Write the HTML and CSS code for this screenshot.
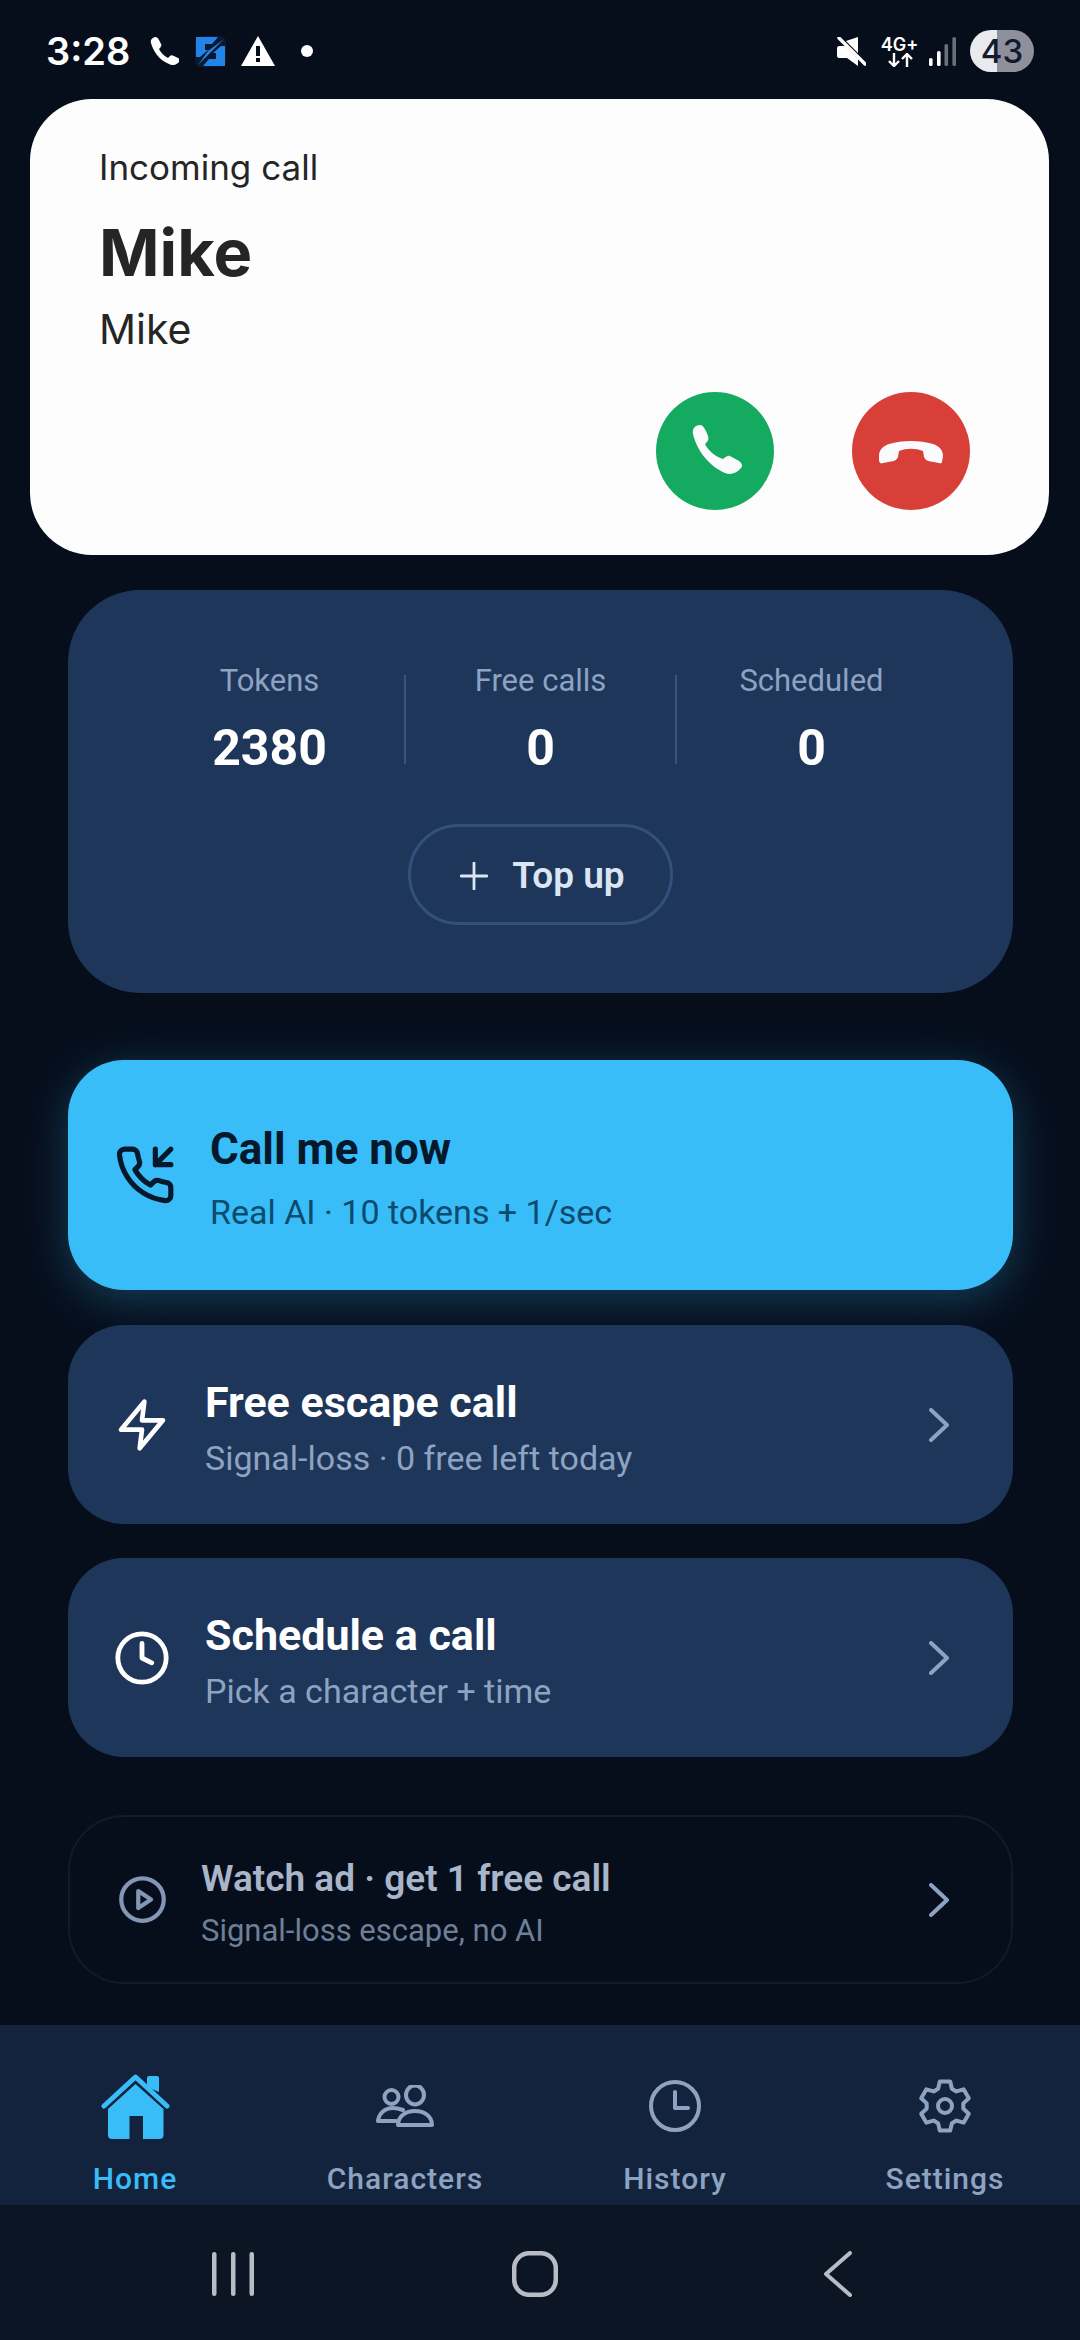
FILE: index.html
```html
<!DOCTYPE html>
<html lang="en">
<head>
  <meta charset="UTF-8" />
  <title>Home</title>
  <link rel="stylesheet" href="styles.css">
</head>
<body>

  <div class="status-bar">
    <div class="status-left">
      <span class="clock">3:28</span>
      <svg class="st-phone" viewBox="0 0 29 28"><path d="M1 6C0 3 2 1 5 0c2 0 3 1 4 3l2 4c1 1 0 3-1 4l-1 1c2 4 5 7 9 9l2-2c1-1 2-1 4 0l4 2c2 1 2 3 1 4-3 3-6 4-10 2C9 23 3 14 1 6z" fill="#fff"/></svg>
      <svg class="st-app" viewBox="0 0 29 29">
        <rect x="-1" y="-1" width="31" height="31" rx="6" fill="#0b1930"/>
        <path d="M0 0H22L16 7H9V13H12L4 20H0Z" fill="#2283e8"/>
        <path d="M29 29H7L13 22H20V16H17L25 9H29Z" fill="#2283e8"/>
        <path d="M28 2 2 28 12 14 Z" fill="#2283e8"/>
      </svg>
      <svg class="st-warn" viewBox="0 0 34 30"><path fill-rule="evenodd" d="M17 0 34 30H0zM15 10v10h4V10zM15 22v4h4v-4z" fill="#fff"/></svg>
      <span class="st-dot"></span>
    </div>
    <div class="status-right">
      <svg class="st-mute" viewBox="0 0 29 29">
        <path d="M21 0v16L9 4zM2 9h6l11 11 2 2v7l-11-8H2c-1 0-2-1-2-2v-8c0-1 1-2 2-2z" fill="#fff"/>
        <path d="M2 1 28 27" stroke="#fff" stroke-width="3.4" stroke-linecap="round"/>
      </svg>
      <div class="st-net">
        <span class="net-label">4G+</span>
        <svg class="net-arrows" viewBox="0 0 26 14" fill="none" stroke="#fff" stroke-width="2.4">
          <path d="M7 0v13M2 8l5 5 5-5M20 14V1M15 6l5-5 5 5"/>
        </svg>
      </div>
      <svg class="st-signal" viewBox="0 0 27 29">
        <rect x="0" y="21" width="3.6" height="8" rx="1.6" fill="#fff"/>
        <rect x="8" y="14" width="3.6" height="15" rx="1.6" fill="#fff"/>
        <rect x="15.500" y="7" width="3.6" height="22" rx="1.6" fill="#6b6f78"/>
        <rect x="23.400" y="0" width="3.6" height="29" rx="1.6" fill="#6b6f78"/>
      </svg>
      <div class="battery"><span>43</span></div>
    </div>
  </div>

  <div class="call-card">
    <div class="call-label">Incoming call</div>
    <div class="call-name">Mike</div>
    <div class="call-sub">Mike</div>
    <div class="call-actions">
      <div class="round-btn accept">
        <svg viewBox="0 0 118 118"><path d="M37 42C36 37 39 33 44 33C47 33 48 36 50 39L52 44C53 47 52 49 50 51C49 52 49 53 50 54C54 60 60 65 67 67C69 66 71 63 74 64L83 69C86 71 87 74 85 76C80 82 74 83 69 81C55 75 41 60 37 42Z" fill="#fbfbfe"/></svg>
      </div>
      <div class="round-btn decline">
        <svg viewBox="0 0 118 118"><path d="M27 64C27 58 31 54 37 52C50 48 68 48 81 52C87 54 91 58 91 64L90 70C90 71 88 72 87 71L76 69C74 68 73 67 72 65L71 59C63 56 55 56 47 59L46 65C45 67 44 68 42 69L31 71C29 72 28 71 27 69Z" fill="#fbfbfe"/></svg>
      </div>
    </div>
  </div>

  <div class="content">
    <div class="stats-card">
      <div class="stats">
        <div class="stat">
          <div class="stat-label">Tokens</div>
          <div class="stat-value">2380</div>
        </div>
        <div class="stat-sep"></div>
        <div class="stat">
          <div class="stat-label">Free calls</div>
          <div class="stat-value">0</div>
        </div>
        <div class="stat-sep"></div>
        <div class="stat">
          <div class="stat-label">Scheduled</div>
          <div class="stat-value">0</div>
        </div>
      </div>
      <div class="top-up">
        <svg viewBox="0 0 28 28" fill="none" stroke="#dce5f3" stroke-width="2.800" stroke-linecap="round"><path d="M14 1v26M1 14h26"/></svg>
        <span>Top up</span>
      </div>
    </div>

    <div class="row row-primary">
      <div class="row-icon">
        <svg class="ic-call" viewBox="0 0 24 24" fill="none" stroke="#06182c" stroke-width="2" stroke-linecap="round" stroke-linejoin="round">
          <path d="M16 2v6h6M22 2l-6 6"/>
          <path d="M22 16.920v3a2 2 0 0 1-2.180 2 19.790 19.790 0 0 1-8.630-3.070 19.500 19.500 0 0 1-6-6 19.790 19.790 0 0 1-3.070-8.670A2 2 0 0 1 4.110 2h3a2 2 0 0 1 2 1.720 12.840 12.840 0 0 0 .7 2.810 2 2 0 0 1-.45 2.110L8.090 9.910a16 16 0 0 0 6 6l1.270-1.270a2 2 0 0 1 2.110-.45 12.840 12.840 0 0 0 2.810.7A2 2 0 0 1 22 16.92z"/>
        </svg>
      </div>
      <div class="row-text">
        <div class="row-title">Call me now</div>
        <div class="row-sub">Real AI · 10 tokens + 1/sec</div>
      </div>
    </div>

    <div class="row row-plain row-free">
      <div class="row-icon">
        <svg class="ic-zap" viewBox="0 0 24 24" fill="none" stroke="#fff" stroke-width="2" stroke-linejoin="round"><path d="M13 2 3 14h9l-1 8 10-12h-9z"/></svg>
      </div>
      <div class="row-text">
        <div class="row-title">Free escape call</div>
        <div class="row-sub">Signal-loss · 0 free left today</div>
      </div>
      <svg class="chevron" viewBox="0 0 22 34"><path d="M3 2 19 17 3 32"/></svg>
    </div>

    <div class="row row-plain row-schedule">
      <div class="row-icon">
        <svg class="ic-clock" viewBox="0 0 24 24" fill="none" stroke="#fff" stroke-width="2" stroke-linecap="round" stroke-linejoin="round"><circle cx="12" cy="12" r="10"/><path d="M12 6v6l4 2"/></svg>
      </div>
      <div class="row-text">
        <div class="row-title">Schedule a call</div>
        <div class="row-sub">Pick a character + time</div>
      </div>
      <svg class="chevron" viewBox="0 0 22 34"><path d="M3 2 19 17 3 32"/></svg>
    </div>

    <div class="row row-ghost">
      <div class="row-icon">
        <svg class="ic-play" viewBox="0 0 24 24" fill="none" stroke="#8396b3" stroke-width="2" stroke-linejoin="round"><circle cx="12" cy="12" r="10"/><path d="M10 8l6 4-6 4z"/></svg>
      </div>
      <div class="row-text">
        <div class="row-title">Watch ad · get 1 free call</div>
        <div class="row-sub">Signal-loss escape, no AI</div>
      </div>
      <svg class="chevron" viewBox="0 0 22 34"><path d="M3 2 19 17 3 32"/></svg>
    </div>
  </div>

  <div class="tabs">
    <div class="tab active">
      <svg class="ic-home" viewBox="0 0 69 66">
        <path d="M46 14V5a2 2 0 0 1 2-2h8a2 2 0 0 1 2 2v14z" fill="#38bdf8"/>
        <path d="M7 36 34.500 11 62.500 36V62a4 4 0 0 1-4 4H42V43H28.500V66H11a4 4 0 0 1-4-4z" fill="#38bdf8"/>
        <path d="M3 33 34.500 4 66 33" fill="none" stroke="#38bdf8" stroke-width="5" stroke-linecap="round" stroke-linejoin="round"/>
      </svg>
      <span>Home</span>
    </div>
    <div class="tab">
      <svg class="ic-people" viewBox="0 0 58 42" fill="none" stroke="#8ea3c1" stroke-width="4" stroke-linejoin="round" stroke-linecap="round">
        <ellipse cx="39" cy="10" rx="9" ry="9.500"/>
        <circle cx="15.500" cy="12" r="7"/>
        <path d="M22 40C22 31 30 26 39 26 48 26 56 31 56 40Z"/>
        <path d="M27 25C24 24 20 23 17 23 9 23 3 28 2 36H20"/>
      </svg>
      <span>Characters</span>
    </div>
    <div class="tab">
      <svg class="ic-history" viewBox="0 0 52 52" fill="none" stroke="#8ea3c1" stroke-width="4" stroke-linecap="round" stroke-linejoin="round"><circle cx="26" cy="26" r="24"/><path d="M26 12V28H39"/></svg>
      <span>History</span>
    </div>
    <div class="tab">
      <svg class="ic-gear" viewBox="0 0 54 56" fill="none" stroke="#8ea3c1" stroke-width="4" stroke-linejoin="round">
        <path d="M20.100 10.800 21.800 3.500H32.200L33.900 10.800 38.400 13.400 45.600 11.300 50.800 20.300 45.300 25.400V30.600L50.800 35.700 45.600 44.700 38.400 42.600 33.900 45.200 32.200 52.500H21.800L20.100 45.200 15.600 42.600 8.400 44.700 3.200 35.700 8.700 30.600V25.400L3.200 20.300 8.400 11.300 15.600 13.400Z"/>
        <circle cx="27" cy="28" r="7"/>
      </svg>
      <span>Settings</span>
    </div>
  </div>

  <div class="nav-bar">
    <svg class="nav-recent" viewBox="0 0 42 44" fill="#b8bcc4"><rect x="0" width="4.500" height="44" rx="2.200"/><rect x="19" width="4.500" height="44" rx="2.200"/><rect x="37.500" width="4.500" height="44" rx="2.200"/></svg>
    <svg class="nav-home" viewBox="0 0 46 46" fill="none" stroke="#b8bcc4" stroke-width="4.500"><rect x="2.200" y="2.200" width="41.600" height="41.600" rx="15"/></svg>
    <svg class="nav-back" viewBox="0 0 30 46" fill="none" stroke="#b8bcc4" stroke-width="4" stroke-linecap="round" stroke-linejoin="round"><path d="M27 2 3 23 27 44"/></svg>
  </div>

</body>
</html>
```

FILE: styles.css
```css
* {
  box-sizing: border-box;
}
body {
  margin: 0;
  width: 1080px;
  height: 2340px;
  overflow: hidden;
  background: #060e1c;
  font-family: Roboto, sans-serif;
  color: white;
}
svg {
  display: block;
  flex: none;
}

/* status bar */
.status-bar {
  height: 99px;
  padding: 3px 46px 0 46px;
  display: flex;
  align-items: center;
  justify-content: space-between;
}
.status-left,
.status-right {
  display: flex;
  align-items: center;
}
.clock {
  font-family: Inter, sans-serif;
  font-size: 38px;
  font-weight: 600;
  width: 104px;
}
.st-phone {
  width: 29px;
  height: 28px;
}
.st-app {
  width: 29px;
  height: 29px;
  margin-left: 17px;
  overflow: visible;
}
.st-warn {
  width: 34px;
  height: 30px;
  margin-left: 16px;
}
.st-dot {
  width: 12px;
  height: 12px;
  border-radius: 50%;
  background: white;
  margin-left: 26px;
}
.st-mute {
  width: 29px;
  height: 29px;
}
.st-net {
  margin-left: 17px;
  width: 33px;
  display: flex;
  flex-direction: column;
  align-items: center;
}
.net-label {
  font-family: Inter, sans-serif;
  font-size: 18px;
  line-height: 17px;
  font-weight: 600;
  white-space: nowrap;
}
.net-arrows {
  width: 26px;
  height: 14px;
}
.st-signal {
  width: 27px;
  height: 29px;
  margin-left: 13px;
}
.battery {
  width: 64px;
  height: 42px;
  margin-left: 14px;
  border-radius: 21px;
  background: linear-gradient(to right, #e8eaee 0 27px, #8e919c 27px);
  color: #121a30;
  font-family: Inter, sans-serif;
  font-size: 33px;
  font-weight: 500;
  display: flex;
  align-items: center;
  justify-content: center;
}

/* incoming call */
.call-card {
  width: 1019px;
  height: 456px;
  margin-left: 30px;
  padding: 43px 79px 0 69px;
  background: #fdfdfd;
  border-radius: 62px;
  color: #252525;
  font-family: Inter, sans-serif;
}
.call-label {
  font-size: 35px;
  line-height: 50px;
}
.call-name {
  font-size: 65px;
  line-height: 76px;
  font-weight: 700;
  margin-top: 23px;
}
.call-sub {
  font-size: 41px;
  line-height: 50px;
  margin-top: 13px;
}
.call-actions {
  margin-top: 38px;
  display: flex;
  justify-content: flex-end;
  gap: 78px;
}
.round-btn {
  width: 118px;
  height: 118px;
  border-radius: 50%;
}
.accept {
  background: #14ab60;
}
.decline {
  background: #d83f38;
}

/* main content */
.content {
  padding: 35px 67px 0 68px;
}
.stats-card {
  height: 403px;
  padding-top: 71px;
  background: #1e365a;
  border-radius: 72px;
  display: flex;
  flex-direction: column;
  align-items: center;
}
.stats {
  display: flex;
  align-items: center;
}
.stat {
  width: 269px;
  text-align: center;
}
.stat-sep {
  width: 2px;
  height: 89px;
  background: #3a5379;
}
.stat-label {
  font-size: 31px;
  line-height: 40px;
  color: #8ea3c1;
}
.stat-value {
  font-size: 50px;
  line-height: 60px;
  font-weight: 700;
  margin-top: 17px;
}
.top-up {
  width: 265px;
  height: 101px;
  margin-top: 46px;
  padding: 2px 0 0 4px;
  border: 3px solid #33507a;
  border-radius: 51px;
  display: flex;
  align-items: center;
  justify-content: center;
  gap: 24px;
  color: #dce5f3;
  font-size: 37px;
  font-weight: 600;
}
.top-up svg {
  width: 28px;
  height: 28px;
}

.row {
  display: flex;
  align-items: center;
  padding: 0 63px 0 44px;
}
.row-icon {
  width: 60px;
  flex: none;
  display: flex;
  justify-content: center;
}
.row-text {
  flex: 1;
  padding-top: 6px;
}
.row-title {
  font-size: 43px;
  line-height: 50px;
  font-weight: 700;
}
.row-sub {
  font-size: 34px;
  line-height: 42px;
  margin-top: 10px;
  color: #8ea3c1;
}
.chevron {
  width: 22px;
  height: 34px;
  fill: none;
  stroke: #8ea3c1;
  stroke-width: 4;
  stroke-linecap: round;
  stroke-linejoin: round;
}

.row-primary {
  height: 230px;
  margin-top: 67px;
  padding-left: 47px;
  border-radius: 56px;
  background: #38bdf8;
  box-shadow: 0 10px 44px rgba(56, 189, 248, 0.28);
  color: #06182c;
}
.row-primary .row-icon {
  margin-right: 35px;
}
.row-primary .row-title {
  font-size: 44px;
}
.row-primary .row-sub {
  color: #0c4a6e;
  margin-top: 17px;
}
.row-plain {
  height: 199px;
  border-radius: 56px;
  background: #1e365a;
}
.row-plain .row-icon {
  margin-right: 33px;
}
.row-free {
  margin-top: 35px;
}
.row-schedule {
  margin-top: 34px;
}
.row-ghost {
  height: 169px;
  margin-top: 58px;
  border: 2px solid #101b2d;
  border-radius: 56px;
  padding-left: 42px;
  padding-right: 61px;
}
.row-ghost .row-icon {
  margin-right: 29px;
}
.row-ghost .row-title {
  font-size: 37px;
  font-weight: 600;
  color: #a9b6c9;
}
.row-ghost .row-sub {
  font-size: 31px;
  color: #6f7f98;
  margin-top: 6px;
}
.ic-call {
  width: 62px;
  height: 62px;
}
.ic-zap {
  width: 56px;
  height: 56px;
}
.ic-clock {
  width: 58px;
  height: 58px;
}
.ic-play {
  width: 51px;
  height: 51px;
}

/* bottom tabs */
.tabs {
  height: 180px;
  margin-top: 41px;
  background: #13233d;
  display: grid;
  grid-template-columns: repeat(4, 270px);
}
.tab {
  display: flex;
  flex-direction: column;
  align-items: center;
  color: #8ea3c1;
  font-size: 30px;
  font-weight: 500;
  letter-spacing: 1px;
}
.tab span {
  margin-top: auto;
  line-height: 40px;
  margin-bottom: 6px;
}
.tab.active {
  color: #38bdf8;
}
.tab .ic-home {
  width: 69px;
  height: 66px;
  margin-top: 48px;
}
.tab .ic-people {
  width: 58px;
  height: 42px;
  margin-top: 60px;
}
.tab .ic-history {
  width: 52px;
  height: 52px;
  margin-top: 55px;
}
.tab .ic-gear {
  width: 54px;
  height: 56px;
  margin-top: 53px;
}

/* system nav */
.nav-bar {
  height: 135px;
  background: #0b1524;
  display: flex;
  align-items: center;
  padding: 3px 0 0 212px;
}
.nav-recent {
  width: 42px;
  height: 44px;
}
.nav-home {
  width: 46px;
  height: 46px;
  margin-left: 258px;
}
.nav-back {
  width: 30px;
  height: 46px;
  margin-left: 265px;
}
```
